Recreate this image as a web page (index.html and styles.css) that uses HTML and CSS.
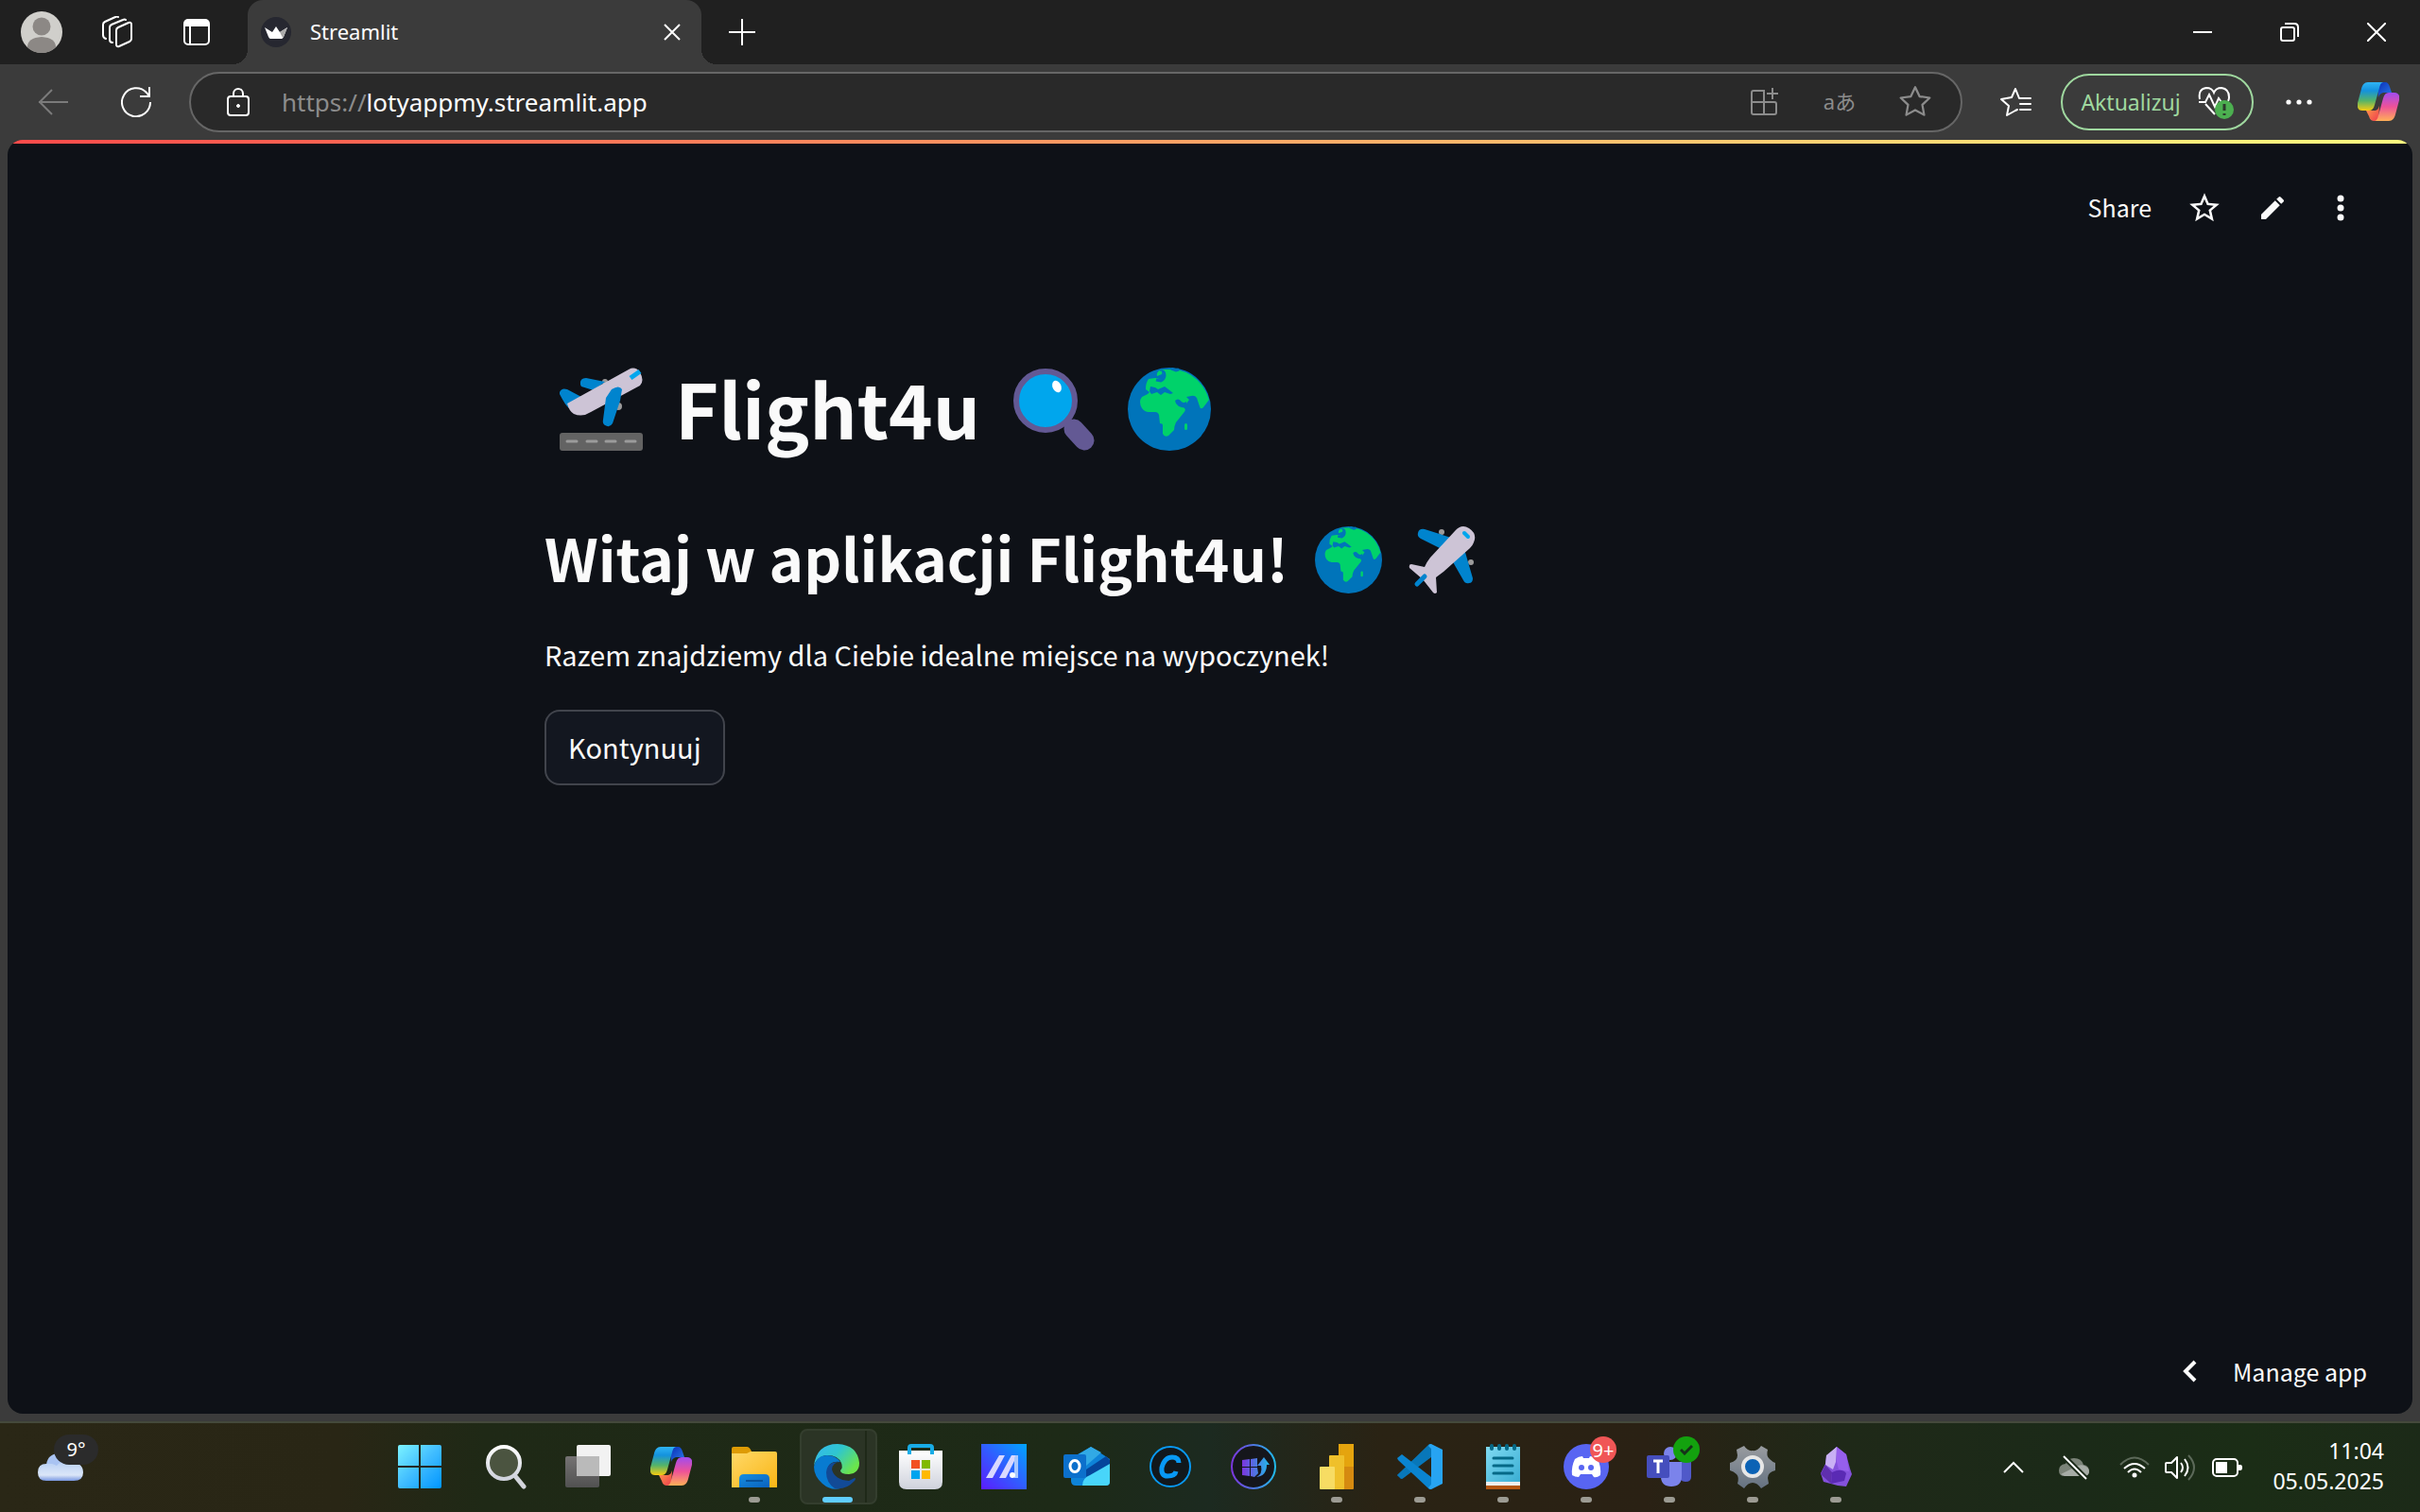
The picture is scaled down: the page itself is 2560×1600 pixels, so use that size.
FILE: index.html
```html
<!DOCTYPE html>
<html lang="pl">
<head>
<meta charset="utf-8">
<title>Streamlit</title>
<link rel="stylesheet" href="styles.css">
</head>
<body>
<svg class="defs" aria-hidden="true">
  <defs>
    <linearGradient id="cpBlue" x1="0" y1="0" x2="0" y2="1"><stop offset="0" stop-color="#2fb4f5"/><stop offset=".3" stop-color="#1492dd"/><stop offset=".65" stop-color="#54b36a"/><stop offset="1" stop-color="#f7cc10"/></linearGradient>
    <linearGradient id="cpPink" x1="0" y1="0" x2="0" y2="1"><stop offset="0" stop-color="#a04cf0"/><stop offset=".5" stop-color="#ee5298"/><stop offset="1" stop-color="#ffb057"/></linearGradient>
    <linearGradient id="cpNavy" x1="0" y1="0" x2="1" y2="1"><stop offset="0" stop-color="#0a2fb8"/><stop offset="1" stop-color="#2a7be8"/></linearGradient>
    <linearGradient id="cpRed" x1="0" y1="0" x2="1" y2="1"><stop offset="0" stop-color="#ffa04a"/><stop offset="1" stop-color="#ee3b4e"/></linearGradient>
    <symbol id="copilot" viewBox="0 0 44 42">
      <path d="M21 0h8c3 0 4 2 5 5l2 6h-7c-4 0-6 2-7 5z" fill="url(#cpNavy)"/>
      <path d="M9 30h8c4 0 5-2 6-5l-1 16h-4c-3 0-5-1-6-5z" fill="url(#cpRed)"/>
      <path d="M11 0h17c-3 0-4 2-5 6l-5 18c-1 4-3 6-6 6H5c-4 0-6-3-5-8L4 7c1-4 3-7 7-7z" fill="url(#cpBlue)"/>
      <path d="M33 41H17c3 0 4-2 5-6l5-18c1-4 3-6 6-6h6c4 0 6 3 5 8l-4 15c-1 4-3 7-7 7z" fill="url(#cpPink)"/>
    </symbol>
    <symbol id="globe" viewBox="0 0 88 88">
      <circle cx="44" cy="44" r="44" fill="#0074ba"/>
      <path d="M31 8q0-6 7-6l14 0q26 6 34 32l-6 8q-3 3-4-1l-3-9q-2-3-6-2l-5 1 3 3-3 4 -6-2q-3 0-1 3l5 4q2 2-1 5l-8 10q-2 4-2 8l-6 6q-4 2-6-2V61q0-2-3-2l-1-9q-1-3-4-3H22q-4 0-7-4-4-7 0-12l6-3 2-2-4-3q0-7 3-11l7-1 6 1q5-1 2-6z" fill="#00d26a"/>
      <path d="M24 20l5 1 3 2 7-3 4 3 5 4-3 1-6-2-4 3-4-3-6 2-2-3zM50 35q3-3 6 0l2 3 4-2v5q-3 2-5 1-4-1-6-4zM32 11l-1-5 5-2 3 6-4 3z" fill="#0074ba"/>
      <path d="M34 4q5-1 5 4 0 4-4 6l-5-1M46 1l5 2 3-1" fill="none" stroke="#0074ba" stroke-width="3"/>
      <path d="M33 4q4-2 3 3l-5 2q-1-3 2-5z" fill="#00d26a"/>
      <rect x="60" y="59" width="3" height="7" rx="1.500" fill="#00d26a"/>
    </symbol>
    <symbol id="star" viewBox="0 0 32 32"><path d="M16 2l4.100 8.700 9.500 1.300-6.900 6.600 1.700 9.500-8.400-4.600-8.400 4.600 1.700-9.500L2.400 12l9.500-1.300z" fill="none" stroke="currentColor" stroke-width="2" stroke-linejoin="round"/></symbol>
    <linearGradient id="win" x1="0" y1="0" x2="1" y2="1"><stop offset="0" stop-color="#7cf3ff"/><stop offset=".5" stop-color="#41bdff"/><stop offset="1" stop-color="#0095ff"/></linearGradient>
    <linearGradient id="grey" x1="0" y1="0" x2="0" y2="1"><stop offset="0" stop-color="#fff"/><stop offset="1" stop-color="#cfd2dc"/></linearGradient>
    <linearGradient id="dark" x1="0" y1="0" x2="0" y2="1"><stop offset="0" stop-color="#757373"/><stop offset="1" stop-color="#515151"/></linearGradient>
    <linearGradient id="folder" x1="0" y1="0" x2="1" y2="1"><stop offset="0" stop-color="#ffd968"/><stop offset="1" stop-color="#f9b515"/></linearGradient>
    <linearGradient id="blue" x1="0" y1="0" x2="1" y2="1"><stop offset="0" stop-color="#168ee0"/><stop offset="1" stop-color="#0961bd"/></linearGradient>
    <linearGradient id="edgeTop" x1="0" y1="0" x2="1" y2=".6"><stop offset="0" stop-color="#35b7f0"/><stop offset=".5" stop-color="#2fc6cf"/><stop offset="1" stop-color="#6be54b"/></linearGradient>
    <linearGradient id="armoury" x1="0" y1="1" x2="1" y2="0"><stop offset="0" stop-color="#5b1cff"/><stop offset=".5" stop-color="#315dff"/><stop offset="1" stop-color="#00a5ff"/></linearGradient>
    <linearGradient id="flash" x1="0" y1="0" x2="1" y2="0"><stop offset="0" stop-color="#7b35dd"/><stop offset="1" stop-color="#21b9e8"/></linearGradient>
    <linearGradient id="note" x1="0" y1="0" x2="1" y2="1"><stop offset="0" stop-color="#80daf2"/><stop offset="1" stop-color="#3aaed3"/></linearGradient>
    <linearGradient id="cloud" x1="0" y1="0" x2="0" y2="1"><stop offset="0" stop-color="#b9d0f4"/><stop offset=".7" stop-color="#dbe6f8"/><stop offset="1" stop-color="#7796df"/></linearGradient>
    <linearGradient id="gear" x1="0" y1="0" x2="0" y2="1"><stop offset="0" stop-color="#999ca0"/><stop offset="1" stop-color="#657281"/></linearGradient>
  </defs>
</svg>

<header class="tabbar">
  <button class="avatar" aria-label="Profil"><svg width="44" height="44" viewBox="0 0 44 44"><circle cx="22" cy="22" r="22" fill="#d0cfcb"/><circle cx="22" cy="16" r="9.500" fill="#8c8885"/><path d="M7 38q0-10 15-11 15 1 15 11-6 6-15 6t-15-6z" fill="#8c8885"/></svg></button>
  <button class="tool" aria-label="Obszary robocze"><svg width="34" height="34" viewBox="0 0 34 34" fill="none" stroke="#fff" stroke-width="2" stroke-linejoin="round" stroke-linecap="round"><path d="M16 15q0-2 2-3l11-5q3-1 3 2v15q0 2-2 3l-11 5q-3 1-3-2z"/><path d="M12 28q-3 0-3-3V12q0-2 2-3l12-5q2-1 3 0"/><path d="M5 24q-3-1-3-4V9q0-2 2-3l11-5q2-1 3 0"/></svg></button>
  <button class="tool" aria-label="Menu kart"><svg width="28" height="28" viewBox="0 0 28 28"><rect x="1" y="1" width="26" height="26" rx="4" fill="none" stroke="#fff" stroke-width="2"/><path d="M1 8V4q0-3 3-3h20q3 0 3 3v4z" fill="#fff"/><path d="M7 8v19" stroke="#fff" stroke-width="2"/></svg></button>
  <div class="tab">
    <svg width="32" height="32" viewBox="0 0 32 32"><circle cx="16" cy="16" r="16" fill="#262730"/><path d="M4 11l8 5 4-6 4 6 8-5-4 10q-1 2-2 2H10q-1 0-2-2z" fill="#fff"/><path d="M20 16l8-5-4 10-1 1z" fill="#aaa"/></svg>
    <span class="tab-title">Streamlit</span>
    <button class="tab-close" aria-label="Zamknij kartę"><svg width="18" height="18" viewBox="0 0 18 18"><path d="M1 1l16 16M17 1L1 17" stroke="#fff" stroke-width="2"/></svg></button>
  </div>
  <button class="new-tab" aria-label="Nowa karta"><svg width="28" height="28" viewBox="0 0 28 28"><path d="M14 0v28M0 14h28" stroke="#fff" stroke-width="2"/></svg></button>
  <div class="window-controls">
    <button aria-label="Minimalizuj"><svg width="20" height="20" viewBox="0 0 20 20"><path d="M0 10h20" stroke="#fff" stroke-width="2"/></svg></button>
    <button aria-label="Przywróć"><svg width="20" height="20" viewBox="0 0 20 20" fill="none" stroke="#fff" stroke-width="2"><rect x="1" y="5" width="14" height="14" rx="2"/><path d="M5 1h10q4 0 4 4v10"/></svg></button>
    <button aria-label="Zamknij"><svg width="20" height="20" viewBox="0 0 20 20"><path d="M0 0l20 20M20 0L0 20" stroke="#fff" stroke-width="2"/></svg></button>
  </div>
</header>

<nav class="toolbar">
  <button class="nav-button" aria-label="Wstecz"><svg width="32" height="28" viewBox="0 0 32 28" fill="none" stroke="#7b7b7b" stroke-width="2"><path d="M32 14H1M15 1L2 14l13 13"/></svg></button>
  <button class="nav-button" aria-label="Odśwież"><svg width="32" height="32" viewBox="0 0 32 32" fill="none" stroke="#fff" stroke-width="2"><path d="M31 16A15 15 0 1 1 27 6l3 4M30 0v10H20"/></svg></button>
  <div class="address">
    <svg width="24" height="30" viewBox="0 0 24 30" fill="none" stroke="#fff" stroke-width="2"><rect x="1" y="9" width="22" height="20" rx="3"/><path d="M7 9V6a5 5 0 0 1 10 0v3"/><circle cx="12" cy="19" r="1.500" fill="#fff" stroke-width="1"/></svg>
    <label class="scheme" for="url">https://</label>
    <input id="url" type="text" value="lotyappmy.streamlit.app">
    <button class="address-button" aria-label="Zainstaluj aplikację"><svg width="30" height="30" viewBox="0 0 30 30" fill="none" stroke="currentColor" stroke-width="2"><path d="M15 15V3H4Q2 3 2 5v21q0 2 2 2h22q2 0 2-2V17q0-2-2-2H2M15 15v13M24 0v12M18 6h12"/></svg></button>
    <button class="address-button translate" aria-label="Przetłumacz">aあ</button>
    <button class="address-button" aria-label="Dodaj do ulubionych"><svg width="36" height="36"><use href="#star"/></svg></button>
  </div>
  <button class="favourites" aria-label="Ulubione"><svg width="34" height="34" viewBox="0 0 34 34" fill="none" stroke="#fff" stroke-width="2" stroke-linejoin="round"><path d="M33 13h-12L17 3l-4 9-11 2 8 7-2 10 9-5 2-1M22 19h11M22 25h11" stroke-linecap="round"/></svg></button>
  <button class="update">Aktualizuj
    <svg width="38" height="36" viewBox="0 0 38 36"><path d="M2 15Q0 4 9 3q6 0 8 5 2-5 8-5 8 1 8 10 0 2-1 4M8 20l10 11M1 18h7l4-8 6 13 4-9 3 4h4" fill="none" stroke="#fff" stroke-width="2"/><circle cx="28" cy="26" r="10" fill="#4caf50"/><path d="M28 20v7M28 30v2" stroke="#2c3a2c" stroke-width="3"/></svg>
  </button>
  <button class="more" aria-label="Więcej"><svg width="28" height="6" viewBox="0 0 28 6" fill="#fff"><circle cx="3" cy="3" r="2.600"/><circle cx="14" cy="3" r="2.600"/><circle cx="25" cy="3" r="2.600"/></svg></button>
  <button class="copilot-button" aria-label="Copilot"><svg width="44" height="42"><use href="#copilot"/></svg></button>
</nav>

<div class="frame">
  <div class="decoration"></div>
  <div class="app-header">
    <button class="share">Share</button>
    <button class="app-tool" aria-label="Favorite"><svg width="38" height="38" viewBox="0 0 24 24" fill="#fafafa"><path d="M22 9.240l-7.190-.62L12 2 9.190 8.630 2 9.240l5.460 4.730L5.820 21 12 17.270 18.180 21l-1.630-7.030zM12 15.400l-3.760 2.270 1-4.280-3.320-2.880 4.380-.38L12 6.100l1.710 4.040 4.380.38-3.320 2.880 1 4.280z"/></svg></button>
    <button class="app-tool" aria-label="Edit"><svg width="32" height="32" viewBox="0 0 24 24" fill="#fafafa"><path d="M3 17.250V21h3.750L17.810 9.940l-3.750-3.750zM20.710 7.040a1 1 0 0 0 0-1.410l-2.340-2.340a1 1 0 0 0-1.410 0l-1.830 1.830 3.750 3.750z"/></svg></button>
    <button class="app-tool" aria-label="Menu"><svg width="8" height="28" viewBox="0 0 8 28" fill="#fafafa"><circle cx="4" cy="4" r="3.500"/><circle cx="4" cy="14" r="3.500"/><circle cx="4" cy="24" r="3.500"/></svg></button>
  </div>
  <main class="content">
    <h1>
      <svg width="88" height="88" viewBox="0 0 88 88"><rect y="69" width="88" height="19" rx="3" fill="#636363"/><path d="M8 78h10M29 78h10M49 78h10M70 78h10" stroke="#9b9b9b" stroke-width="3" stroke-linecap="round"/><circle cx="48" cy="15" r="3" fill="#9b9b9b"/><circle cx="62" cy="41" r="4" fill="#9b9b9b"/><path d="M0 26q2-5 8-3l15 8-13 12Q6 40 0 28zM22 18q-1-7 6-7l20 4-12 9-13-4z" fill="#0084ce"/><path d="M73 2q7-4 12 3 5 9 0 14L33 47q-9 6-18 2-5-3-7-11z" fill="#cdc4d6"/><path d="M55 23q8-5 11 0l-2 12-8 24q-3 5-8 2-3-2-2-6l3-23z" fill="#0084ce"/><path d="M85 4l-10 7" stroke="#00a6ed" stroke-width="5"/></svg>
      <span>Flight4u</span>
      <svg width="88" height="88" viewBox="0 0 88 88"><path d="M65 65l11 12" stroke="#635994" stroke-width="21" stroke-linecap="round"/><circle cx="35" cy="35" r="31" fill="#00a6ed" stroke="#635994" stroke-width="6"/><ellipse cx="47" cy="20" rx="4.500" ry="6.500" transform="rotate(-25 47 20)" fill="#fff"/></svg>
      <svg width="88" height="88"><use href="#globe"/></svg>
    </h1>
    <h2>
      <span>Witaj w aplikacji Flight4u!</span>
      <svg width="71" height="71"><use href="#globe"/></svg>
      <svg width="71" height="71" viewBox="0 0 71 71"><circle cx="35" cy="6" r="3" fill="#9b9b9b"/><circle cx="66" cy="38" r="3" fill="#9b9b9b"/><path d="M45 12L17 3q-6-1-7 4-1 4 3 6l24 12zM59 24l9 31q0 5-4 5-4 1-6-3L46 36z" fill="#0084ce"/><path d="M49 5q7-8 15-3 9 6 5 15-1 3-4 6L37 48l-8 6 1 16q-2 2-4 0L15 56 1 44q-1-4 2-4l14 3q2-5 6-10z" fill="#cdc4d6"/><path d="M17 53l-8 8" stroke="#0084ce" stroke-width="5" stroke-linecap="round"/><path d="M59 7l4 4" stroke="#00a6ed" stroke-width="4" stroke-linecap="round"/></svg>
    </h2>
    <p>Razem znajdziemy dla Ciebie idealne miejsce na wypoczynek!</p>
    <button class="continue">Kontynuuj</button>
  </main>
  <div class="app-footer">
    <button class="manage"><svg width="16" height="24" viewBox="0 0 16 24"><path d="M14 2L4 12l10 10" fill="none" stroke="#fff" stroke-width="4"/></svg>Manage app</button>
  </div>
</div>

<footer class="taskbar">
  <div class="weather">
    <button aria-label="Pogoda">
      <svg width="48" height="30" viewBox="0 0 48 30"><path d="M9 14Q9 2 20 0q12 2 14 14z" fill="#a9c3f2"/><path d="M9 11q6-1 11 2 4-5 12-4 16 0 16 11 0 9-10 9H9q-9 0-9-9t9-9z" fill="url(#cloud)"/></svg>
      <span class="temperature">9°</span>
    </button>
  </div>
  <div class="apps">
    <button aria-label="Start"><svg width="48" height="48" viewBox="0 0 48 48"><path d="M3 1h20v22H1V3q0-2 2-2zM25 1h20q2 0 2 2v20H25zM1 25h22v22H3q-2 0-2-2zM25 25h22v20q0 2-2 2H25z" fill="url(#win)"/></svg></button>
    <button aria-label="Szukaj"><svg width="48" height="48" viewBox="0 0 48 48"><path d="M35 34l9 11" stroke="#d3d5dc" stroke-width="5" stroke-linecap="round"/><circle cx="23" cy="20" r="17" fill="#4b5440" stroke="url(#grey)" stroke-width="4"/></svg></button>
    <button aria-label="Widok zadań"><svg width="48" height="48" viewBox="0 0 48 48"><rect y="13" width="36" height="33" rx="2" fill="url(#dark)"/><rect x="12" y="1" width="36" height="33" rx="2" fill="#f2f2f2"/><path d="M12 13h24v21H12z" fill="#bababa"/></svg></button>
    <button aria-label="Copilot"><svg width="44" height="42"><use href="#copilot"/></svg></button>
    <button class="running" aria-label="Eksplorator plików"><svg width="48" height="48" viewBox="0 0 48 48"><path d="M2 3h14q3 0 5 5v6H0V5q0-2 2-2z" fill="#de9b05"/><path d="M0 10h16l4-2h26q2 0 2 2v36H0z" fill="url(#folder)"/><path d="M8 46V37q0-5 5-5h22q5 0 5 5v9z" fill="url(#blue)"/><path d="M15 39h18" stroke="#07529b" stroke-width="2"/></svg></button>
    <button class="running active" aria-label="Microsoft Edge"><svg width="48" height="48" viewBox="0 0 48 48"><path d="M0 23Q3 0 25 0q21 1 23 20 0 11-11 12-9 0-9-4 3-3 1-8-4-9-17-8Q3 14 0 23z" fill="url(#edgeTop)"/><path d="M0 24Q3 12 14 12q9 0 14 7-14-2-14 12 1 12 14 16-10 3-19-5-9-8-9-18z" fill="#087bd1"/><path d="M28 19q-8 0-9 8 3 11 18 12l6-3q2 0 0 3-9 10-21 8-9-6-9-17 1-12 15-11z" fill="#124a96"/></svg></button>
    <button aria-label="Microsoft Store"><svg width="48" height="48" viewBox="0 0 48 48"><path d="M1 7h46v33q0 8-8 8H9q-8 0-8-8z" fill="url(#grey)"/><path d="M12 11V4q0-2 2-2h20q2 0 2 2v7" fill="none" stroke="#18ace6" stroke-width="4"/><path d="M14 17h9v9h-9z" fill="#f25022"/><path d="M25 17h9v9h-9z" fill="#7fba00"/><path d="M14 28h9v9h-9z" fill="#00a4ef"/><path d="M25 28h9v9h-9z" fill="#ffb900"/></svg></button>
    <button aria-label="MyASUS"><svg width="48" height="48" viewBox="0 0 48 48"><path d="M0 0h48v48H0z" fill="url(#armoury)"/><path d="M19 12h6L12 36H5z" fill="#d9d8ff"/><path d="M32 12h6L26 36h-7z" fill="#d9d8ff"/><path d="M36 12h3v24h-4V15z" fill="#a9c8ff"/><circle cx="33" cy="33" r="3" fill="#fff"/></svg></button>
    <button aria-label="Outlook"><svg width="50" height="42" viewBox="0 0 50 42"><path d="M8 12L29 0l20 13v24q0 4-4 4H13q-5 0-5-5z" fill="#0e83d8"/><path d="M11 11L29 0l11 6-16 14z" fill="#31a9e5"/><path d="M24 24l21-14 4 4v6L24 37z" fill="#05459b"/><path d="M49 18v19q0 4-4 4H20q0-8 8-11z" fill="#48d5fa"/><rect y="8" width="24" height="25" rx="2" fill="#0c70cc"/><ellipse cx="12" cy="20.500" rx="5" ry="6" fill="none" stroke="#fff" stroke-width="3"/></svg></button>
    <button aria-label="Cleaner"><svg width="48" height="48" viewBox="0 0 48 48"><circle cx="24" cy="24" r="21" fill="#11181d" stroke="#0899f5" stroke-width="2"/><path d="M33 20q0-6-7-6-8 0-11 11-1 9 6 9 8 0 9-5" fill="none" stroke="#0899f5" stroke-width="5"/></svg></button>
    <button aria-label="Driver Booster"><svg width="48" height="48" viewBox="0 0 48 48"><circle cx="24" cy="24" r="23" fill="#15161b" stroke="url(#flash)" stroke-width="2"/><path d="M12 17l8-1v8h-8zM21 16l7-1v9h-7zM12 25h8v9l-8-1zM21 25h7l1 6-4 4-4-1zM27 35q7-3 5-12h-4l7-9 6 8h-3q0 12-11 13z" fill="url(#flash)"/></svg></button>
    <button class="running" aria-label="Power BI"><svg width="48" height="48" viewBox="0 0 48 48"><rect x="26" width="16" height="48" rx="1" fill="#d58a10"/><path d="M26 0h16v24H26z" fill="#e5a40e"/><rect x="16" y="12" width="16" height="36" rx="1" fill="#efc02b"/><rect x="6" y="24" width="16" height="24" rx="1" fill="#f7dc63"/></svg></button>
    <button class="running" aria-label="Visual Studio Code"><svg width="48" height="48" viewBox="0 0 48 48"><path d="M0 33l5 4 31-25V0z" fill="#0065a9"/><path d="M0 33l4 4q2 0 4-2l28-21V0h-2z" fill="#0877b9"/><path d="M0 15l5-4 31 24v13h-2L1 17z" fill="#0a84d0"/><path d="M36 0l12 6v36l-12 6q-2 0-3-2l3-3V5l-3-3q1-2 3-2z" fill="#27a4f2"/></svg></button>
    <button class="running" aria-label="Notatnik"><svg width="48" height="48" viewBox="0 0 48 48"><path d="M6 42h36v6H6z" fill="#b55610"/><path d="M6 38h36v6H6z" fill="#eee"/><path d="M6 3h36v37H6z" fill="url(#note)"/><path d="M12 2v3M20 2v3M28 2v3M36 2v3" stroke="#056987" stroke-width="4" stroke-linecap="round"/><path d="M14 15h20M14 23h20M14 31h20" stroke="#056987" stroke-width="3" stroke-linecap="round"/></svg></button>
    <button class="running" aria-label="Discord"><svg width="48" height="48" viewBox="0 0 48 48"><circle cx="24" cy="24" r="24" fill="#5865f2"/><path d="M12 16q4-3 8-3l1 2h6l1-2q4 0 8 3 4 8 3 17-4 3-7 2l-2-3h-12l-2 3q-4 0-7-2-1-9 3-17z" fill="#fff"/><ellipse cx="19" cy="25" rx="3" ry="3" fill="#5865f2"/><ellipse cx="29" cy="25" rx="3" ry="3" fill="#5865f2"/></svg><span class="badge count">9+</span></button>
    <button class="running" aria-label="Microsoft Teams"><svg width="48" height="48" viewBox="0 0 48 48"><circle cx="25" cy="10" r="7" fill="#7b83eb"/><path d="M34 19h13v16q0 5-6 5-5 0-7-5z" fill="#5059c9"/><path d="M15 19h22v15q0 11-11 11T15 34z" fill="#7b83eb"/><rect y="12" width="24" height="24" rx="2" fill="#454ebd"/><path d="M7 18h10M12 18v13" stroke="#fff" stroke-width="3"/></svg><span class="badge ok"><svg width="14" height="12" viewBox="0 0 14 12"><path d="M1 6l4 4 8-8" fill="none" stroke="#17321a" stroke-width="3"/></svg></span></button>
    <button class="running" aria-label="Ustawienia"><svg width="48" height="48" viewBox="0 0 48 48"><path d="M15 2q4 6 9 5 5 1 9-5l7 4q-2 7 2 10 3 3 6 4v8q-8 2-8 8l1 6-8 5q-4-6-9-6t-9 6l-7-5q2-7-1-10-3-3-7-4v-8q8-2 8-8l-1-6z" fill="url(#gear)"/><circle cx="24" cy="24" r="10" fill="#0b62b5" stroke="#e7e7e7" stroke-width="4"/></svg></button>
    <button class="running" aria-label="Obsidian"><svg width="48" height="48" viewBox="0 0 48 48"><path d="M25 3l10 8 4 15 2 6-6 13-9-1-15-4-3-9 5-10 1-8z" fill="#8451dc"/><path d="M25 3l-1 16-3 8-8-5 1-10z" fill="#c9b0f5"/><path d="M25 3l10 8 3 18-11-2-2-8z" fill="#965fec"/><path d="M13 22l7 8-1 12-11-10z" fill="#5f2fae"/><path d="M20 30q10-5 15 1l-2 8-14 3z" fill="#5a2ab4"/></svg></button>
  </div>
  <div class="tray">
    <button class="tray-more" aria-label="Ukryte ikony"><svg width="22" height="14" viewBox="0 0 22 14"><path d="M1 12L11 2l10 10" fill="none" stroke="#fff" stroke-width="2"/></svg></button>
    <button class="onedrive" aria-label="OneDrive"><svg width="34" height="28" viewBox="0 0 34 28"><path d="M7 23q-6 0-6-6t7-7q2-6 9-6 8 0 10 7 6 1 6 7 0 5-6 5z" fill="#7b8378"/><path d="M3 21l14-7q6-4 11-2 5 2 5 6 0 5-6 5H7z" fill="#a7aca6"/><path d="M6 2l24 24" stroke="#1c2a19" stroke-width="6"/><path d="M6 2l24 24" stroke="#fff" stroke-width="2"/></svg></button>
    <button class="quick" aria-label="Sieć, dźwięk, bateria">
      <svg width="32" height="24" viewBox="0 0 32 24" fill="none" stroke="#fff" stroke-width="2"><path d="M1 9q15-15 30 0" stroke="#5c6959"/><path d="M5 13q11-10 22 0M9 17q7-7 14 0"/><circle cx="16" cy="20" r="2.500" fill="#fff" stroke="none"/></svg>
      <svg width="34" height="28" viewBox="0 0 34 28" fill="none" stroke="#fff" stroke-width="2" stroke-linejoin="round"><path d="M1 10q0-1 1-1h5l6-6v22l-6-6H2q-1 0-1-1zM17 9q4 5 0 10M21 5q7 9 0 18"/><path d="M25 1q12 13 0 26" stroke="#5c6959"/></svg>
      <svg width="32" height="20" viewBox="0 0 32 20"><rect x="1" y="1" width="26" height="18" rx="4" fill="none" stroke="#fff" stroke-width="2"/><path d="M4 4h12v12H4zM28 7h2q2 0 2 3t-2 3h-2z" fill="#fff"/></svg>
    </button>
    <button class="clock"><time>11:04</time><time>05.05.2025</time></button>
  </div>
</footer>
</body>
</html>
```
FILE: styles.css
```css
* {
  box-sizing: border-box;
}

body {
  margin: 0;
  min-height: 100vh;
  display: flex;
  flex-direction: column;
  background: #3b3b3b;
  color: #fff;
  font-family: "Noto Sans", "Open Sans", "Noto Sans CJK JP", sans-serif;
  font-size: 22px;
}

button {
  display: flex;
  align-items: center;
  justify-content: center;
  margin: 0;
  padding: 0;
  border: 0;
  background: none;
  color: inherit;
  font: inherit;
  white-space: nowrap;
}

svg {
  display: block;
  flex: none;
}

.defs {
  position: absolute;
  width: 0;
  height: 0;
}

/* Tab strip */
.tabbar {
  display: flex;
  align-items: stretch;
  height: 68px;
  padding-left: 22px;
  background: #202020;
}

.tool {
  width: 52px;
  margin-left: 32px;
}

.tab {
  position: relative;
  display: flex;
  align-items: center;
  flex: 0 1 480px;
  margin-left: 28px;
  padding: 0 15px 0 14px;
  border-radius: 16px 16px 0 0;
  background: #3b3b3b;
}

.tab::before,
.tab::after {
  content: "";
  position: absolute;
  bottom: 0;
  width: 16px;
  height: 16px;
}

.tab::before {
  right: 100%;
  background: radial-gradient(circle at 0 0, #202020 16px, #3b3b3b 16px);
}

.tab::after {
  left: 100%;
  background: radial-gradient(circle at 100% 0, #202020 16px, #3b3b3b 16px);
}

.tab-title {
  flex: 1;
  margin-left: 20px;
  padding-bottom: 2px;
}

.tab-close {
  width: 32px;
  height: 32px;
}

.new-tab {
  width: 48px;
  margin-left: 19px;
}

.window-controls {
  display: flex;
  margin-left: auto;
}

.window-controls button {
  width: 92px;
}

/* Address row */
.toolbar {
  display: flex;
  align-items: center;
  height: 80px;
  padding: 0 12px;
}

.nav-button {
  width: 88px;
  height: 64px;
}

.address {
  display: flex;
  align-items: center;
  flex: 1;
  height: 64px;
  margin: 0 16px 0 12px;
  padding: 0 8px 0 38px;
  border: 2px solid #666;
  border-radius: 32px;
  background: #292929;
  font-size: 26px;
}

.scheme {
  margin-left: 34px;
  color: #8c8c8c;
}

.address input {
  flex: 1;
  min-width: 0;
  padding: 0;
  border: 0;
  outline: 0;
  background: none;
  color: #fff;
  font: inherit;
}

.address-button {
  width: 80px;
  height: 56px;
  color: #8c8c8c;
}

.translate {
  padding-bottom: 4px;
  font-family: "Noto Sans", "Noto Sans CJK JP", sans-serif;
  font-size: 22px;
}

.favourites,
.more {
  width: 80px;
  height: 64px;
}

.update {
  gap: 18px;
  width: 204px;
  height: 60px;
  margin: 0 8px;
  border: 2px solid #9fd89f;
  border-radius: 30px;
  color: #9fd89f;
  font-size: 23px;
}

.copilot-button {
  width: 64px;
  height: 64px;
  margin-left: 12px;
}

/* Web app */
.frame {
  display: flex;
  flex-direction: column;
  flex: 1;
  margin: 0 8px 8px;
  border-radius: 16px;
  overflow: hidden;
  background: #0e1117;
  color: #fafafa;
  font-family: "Noto Sans CJK SC", "Noto Sans", sans-serif;
}

.decoration {
  height: 4px;
  background: linear-gradient(90deg, #ff4b4b, #fffd80);
}

.app-header {
  display: flex;
  align-items: center;
  justify-content: flex-end;
  height: 136px;
  padding-right: 40px;
}

.share {
  margin-right: 20px;
  padding-bottom: 2px;
  font-size: 25px;
}

.app-tool {
  width: 72px;
  height: 64px;
}

.content {
  flex: 1;
  width: 100%;
  max-width: 1408px;
  margin: 0 auto;
  padding-top: 92px;
}

h1,
h2 {
  display: flex;
  align-items: center;
  margin: 0;
  font-weight: 700;
  white-space: nowrap;
}

h1 span,
h2 span {
  padding-bottom: 6px;
}

h1 {
  gap: 34px;
  height: 106px;
  margin-bottom: 63px;
  padding-left: 16px;
  font-size: 79px;
}

h2 {
  gap: 28px;
  height: 86px;
  margin-bottom: 32px;
  font-size: 62px;
}

p {
  margin: 0 0 34px;
  font-size: 29px;
  line-height: 50px;
}

.continue {
  height: 80px;
  padding: 0 23px 3px;
  border: 2px solid #41444c;
  border-radius: 16px;
  background: #131720;
  font-size: 29px;
}

.app-footer {
  display: flex;
  justify-content: flex-end;
  padding-right: 48px;
}

.manage {
  gap: 38px;
  height: 88px;
  padding-bottom: 2px;
  font-size: 25px;
}

/* Taskbar */
.taskbar {
  display: flex;
  height: 96px;
  border-top: 2px solid #44493b;
  background: linear-gradient(90deg, #2a2716 0, #292615 14%, #1f2916 20%, #1d2a17 44%, #1c2a20 50%, #2a2314 57%, #2a2114 68%, #1f2918 76%, #1b2a18 86%, #1b2d16 93%, #1c2a18 100%);
}

.weather {
  flex: 1;
  padding: 32px 0 0 40px;
}

.weather button {
  position: relative;
}

.temperature {
  position: absolute;
  left: 17px;
  top: -20px;
  width: 47px;
  height: 32px;
  border-radius: 16px;
  background: #2b2b2b;
  font-size: 20px;
  line-height: 32px;
}

.apps {
  display: flex;
}

.apps button {
  position: relative;
  width: 88px;
  padding-bottom: 2px;
}

.apps button:first-child {
  margin-right: 2px;
}

.running::after {
  content: "";
  position: absolute;
  bottom: 10px;
  left: calc(50% - 6px);
  width: 12px;
  height: 6px;
  border-radius: 3px;
  background: #9c9b93;
}

.apps .active {
  margin: 6px 2px 8px 4px;
  width: 82px;
  padding: 0 4px 0 0;
  border-radius: 8px;
  border: 2px solid #343e2e;
  background: linear-gradient(90deg, #2b3425 86%, #1f2918 86%, #1f2918 89%, #2b3425 89%);
}

.active::after {
  bottom: 0;
  left: 22px;
  width: 32px;
  background: #60cdff;
}

.badge {
  position: absolute;
  right: 12px;
  top: 14px;
  display: flex;
  align-items: center;
  justify-content: center;
  width: 28px;
  height: 28px;
  border-radius: 14px;
}

.count {
  background: #f05656;
  font-size: 20px;
}

.ok {
  background: #13a10e;
}

.tray {
  display: flex;
  align-items: center;
  flex: 0 0 574px;
  justify-content: flex-end;
  padding-right: 38px;
}

.onedrive {
  margin-left: 36px;
}

.quick {
  gap: 16px;
  margin: 0 32px 0 31px;
}

.clock {
  flex-direction: column;
  align-items: flex-end;
  padding-bottom: 4px;
  font-size: 23px;
  line-height: 32px;
}
```
